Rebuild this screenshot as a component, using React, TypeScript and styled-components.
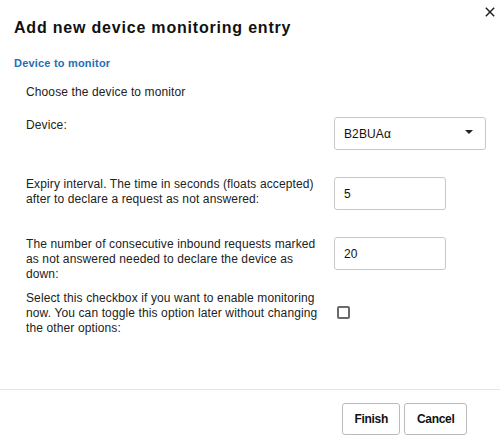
import React from "react";
import styled, { createGlobalStyle } from "styled-components";

const GlobalStyle = createGlobalStyle`
  html, body {
    margin: 0;
    padding: 0;
    background: #fff;
  }
  body {
    font-family: "Liberation Sans", Arial, sans-serif;
    color: #222;
  }
`;

const Dialog = styled.div`
  position: relative;
  width: 500px;
  height: 445px;
  display: flex;
  flex-direction: column;
  background: #fff;
`;

const CloseButton = styled.button`
  position: absolute;
  top: 7px;
  right: 5px;
  width: 10px;
  height: 10px;
  padding: 0;
  border: none;
  background: none;
  cursor: pointer;
  display: flex;
`;

const Header = styled.div`
  padding: 19px 14px 0 14px;
`;

const Title = styled.h2`
  margin: 0;
  font-size: 16px;
  line-height: 18px;
  font-weight: bold;
  color: #111;
  letter-spacing: 0.8px;
`;

const Body = styled.div`
  flex: 1;
  padding: 20px 14px 0 14px;
`;

const SectionTitle = styled.div`
  font-size: 11px;
  line-height: 13px;
  font-weight: bold;
  letter-spacing: 0.2px;
  color: #1f6fb5;
  margin-bottom: 15px;
`;

const Intro = styled.div`
  font-size: 12px;
  line-height: 15px;
  letter-spacing: 0.12px;
  padding-left: 12px;
  margin-bottom: 17px;
`;

const FormRow = styled.div<{ $spacing: number }>`
  display: grid;
  grid-template-columns: 296px auto;
  column-gap: 12px;
  align-items: start;
  padding-left: 12px;
  margin-bottom: ${(p) => p.$spacing}px;
`;

const Label = styled.div<{ $offset?: number }>`
  font-size: 12px;
  line-height: 15px;
  letter-spacing: 0.12px;
  margin-top: ${(p) => p.$offset ?? 0}px;
`;

const SelectBox = styled.div`
  position: relative;
  box-sizing: border-box;
  width: 152px;
  height: 33px;
  border: 1px solid #c8c8c8;
  border-radius: 3px;
  display: flex;
  align-items: center;
  padding-left: 9px;
  font-size: 12px;
  letter-spacing: 0.12px;
  color: #111;
`;

const Caret = styled.span`
  position: absolute;
  right: 12px;
  top: 12px;
  width: 0;
  height: 0;
  border-left: 4px solid transparent;
  border-right: 4px solid transparent;
  border-top: 4px solid #222;
`;

const TextInput = styled.input`
  box-sizing: border-box;
  width: 112px;
  height: 33px;
  margin: 0;
  border: 1px solid #c8c8c8;
  border-radius: 3px;
  padding: 0 9px;
  font-family: "Liberation Sans", Arial, sans-serif;
  font-size: 12px;
  color: #111;
  outline: none;
`;

const CheckBox = styled.span`
  display: block;
  box-sizing: border-box;
  width: 13px;
  height: 13px;
  border: 2px solid #6a6a6a;
  border-radius: 2px;
  margin: 15px 0 0 3px;
`;

const Footer = styled.div`
  border-top: 1px solid #e5e5e5;
  display: flex;
  justify-content: flex-end;
  gap: 4px;
  padding: 13px 33px 10px 0;
`;

const Button = styled.button`
  box-sizing: border-box;
  height: 32px;
  padding: 0 11.5px;
  border: 1px solid #bbb;
  border-radius: 3px;
  background: #fff;
  font-family: "Liberation Sans", Arial, sans-serif;
  font-size: 12px;
  font-weight: bold;
  letter-spacing: -0.3px;
  color: #111;
  cursor: pointer;
`;

export default function App() {
  return (
    <>
      <GlobalStyle />
      <Dialog>
        <CloseButton aria-label="Close">
          <svg width="10" height="10" viewBox="0 0 10 10">
            <path d="M0.8 0.8 L9.2 9.2 M9.2 0.8 L0.8 9.2" stroke="#222" strokeWidth="1.5" />
          </svg>
        </CloseButton>
        <Header>
          <Title>Add new device monitoring entry</Title>
        </Header>
        <Body>
          <SectionTitle>Device to monitor</SectionTitle>
          <Intro>Choose the device to monitor</Intro>
          <FormRow $spacing={27}>
            <Label $offset={1}>Device:</Label>
            <SelectBox>
              B2BUAα
              <Caret />
            </SelectBox>
          </FormRow>
          <FormRow $spacing={27}>
            <Label>
              Expiry interval. The time in seconds (floats accepted) after to declare a request as not answered:
            </Label>
            <TextInput defaultValue="5" />
          </FormRow>
          <FormRow $spacing={9}>
            <Label>
              The number of consecutive inbound requests marked as not answered needed to declare the device as down:
            </Label>
            <TextInput defaultValue="20" />
          </FormRow>
          <FormRow $spacing={0}>
            <Label>
              Select this checkbox if you want to enable monitoring now. You can toggle this option later without changing the other options:
            </Label>
            <CheckBox />
          </FormRow>
        </Body>
        <Footer>
          <Button>Finish</Button>
          <Button>Cancel</Button>
        </Footer>
      </Dialog>
    </>
  );
}
